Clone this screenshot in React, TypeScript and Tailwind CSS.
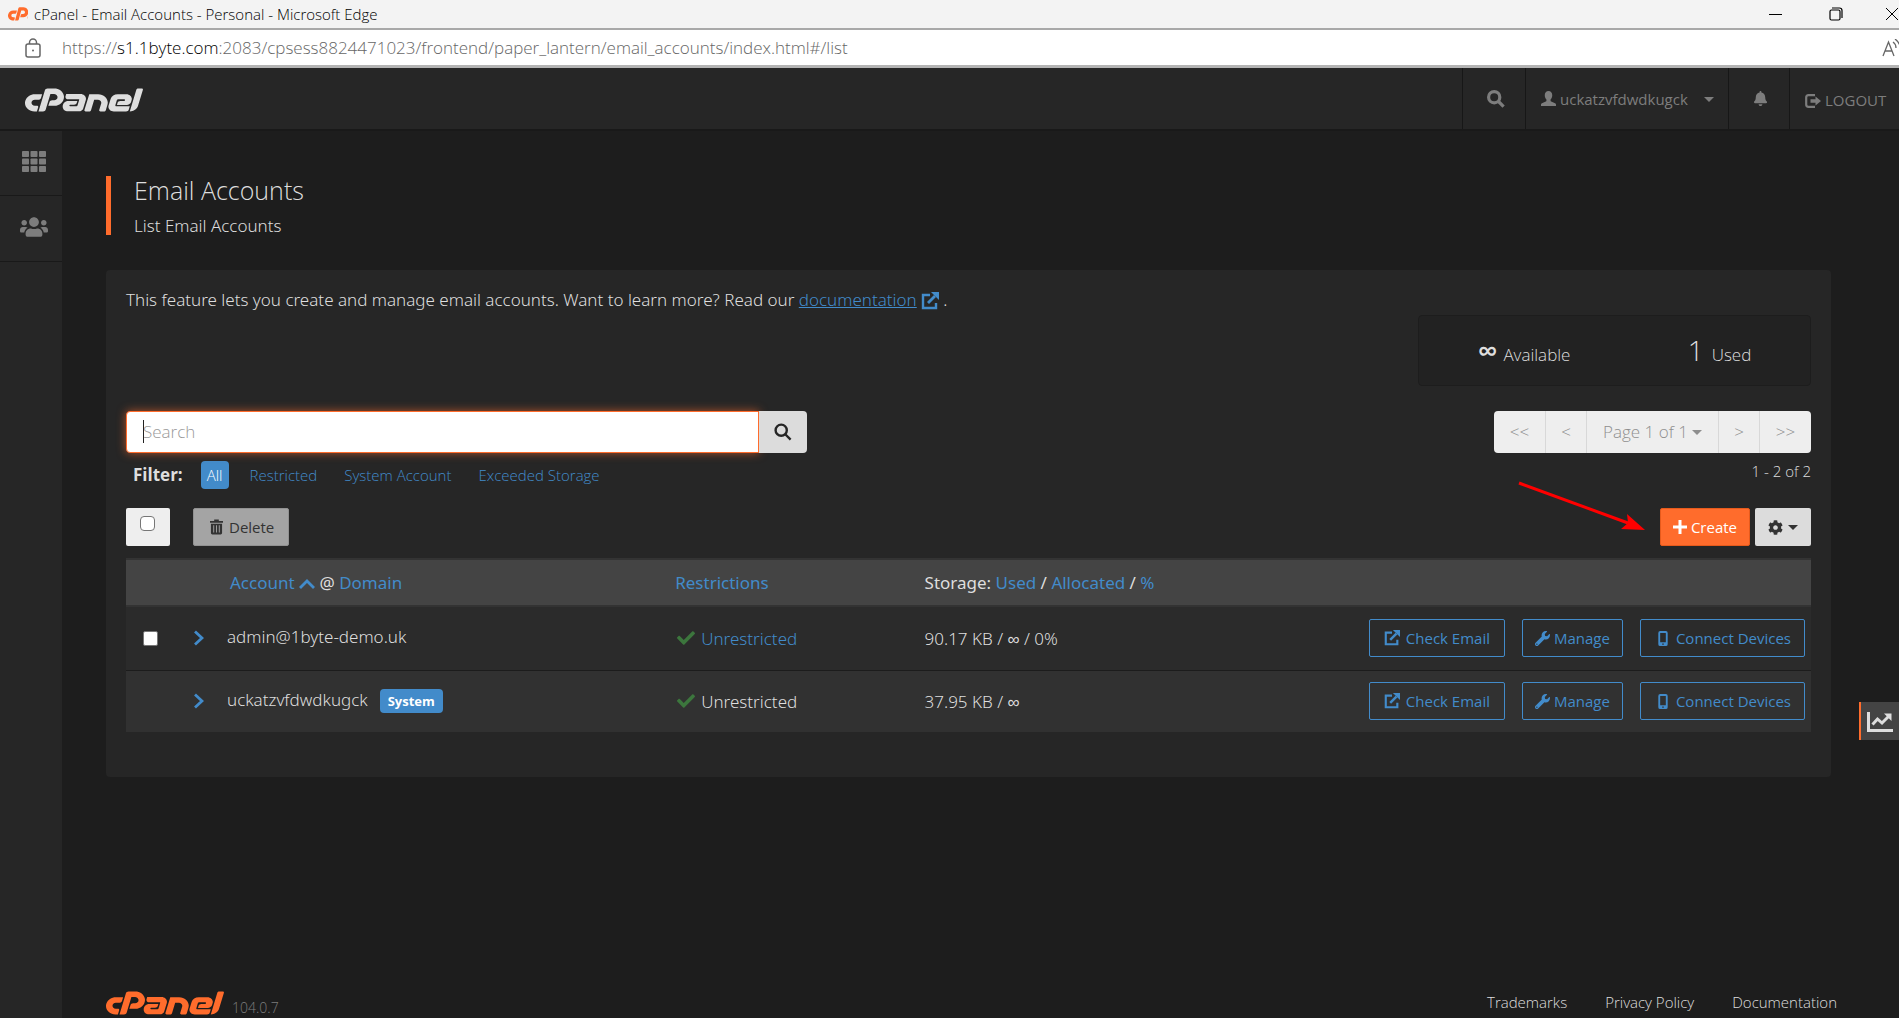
import React from 'react';
import { FaBell, FaCheck, FaCog, FaCpanel, FaUsers, FaWrench } from 'react-icons/fa';

type IconProps = { className?: string };

const ExternalIcon: React.FC<IconProps> = ({ className }) => (
  <svg viewBox="0 0 18 18" className={className} fill="none" stroke="currentColor" aria-hidden="true">
    <path d="M9 3H2v13h13v-5" strokeWidth="2.4" />
    <path d="M7 11L14 4" strokeWidth="2.8" />
    <path d="M10 0h8v8z" fill="currentColor" stroke="none" />
  </svg>
);

const SearchIcon: React.FC<IconProps & { weight: string }> = ({ className, weight }) => (
  <svg viewBox="0 0 18 18" className={className} fill="none" stroke="currentColor" strokeWidth={weight} aria-hidden="true">
    <circle cx="7.2" cy="7.2" r="5.6" />
    <path d="M11.5 11.5L16.6 16.6" />
  </svg>
);

const UserIcon: React.FC<IconProps> = ({ className }) => (
  <svg viewBox="0 0 16 16" className={className} fill="currentColor" aria-hidden="true">
    <path d="M8 0c2.5 0 4 2 4 4.5 0 2-.8 3.6-1.8 4.6v1.2c0 .5.3.8.7 1L15 13c.6.3 1 .8 1 1.5V16H0v-1.5c0-.7.4-1.2 1-1.5l4.1-1.7c.4-.2.7-.5.7-1V9.1C4.8 8.1 4 6.5 4 4.5 4 2 5.5 0 8 0z" />
  </svg>
);

const LogoutIcon: React.FC<IconProps> = ({ className }) => (
  <svg viewBox="0 0 16 14" className={className} fill="currentColor" aria-hidden="true">
    <path d="M10 1.2H3.5Q1.2 1.2 1.2 3.5v7q0 2.3 2.3 2.3H10" fill="none" stroke="currentColor" strokeWidth="2.2" />
    <path d="M5.5 5.3h5V2.5L16 7l-5.5 4.5V8.7h-5z" />
  </svg>
);

const GridIcon: React.FC<IconProps> = ({ className }) => (
  <svg viewBox="0 0 24 21" className={className} fill="currentColor" aria-hidden="true">
    {[0, 7.5, 15].map((y) =>
      [0, 8.5, 17].map((x) => <rect key={`${x}-${y}`} x={x} y={y} width="7" height="6" rx="0.8" />)
    )}
  </svg>
);

const TrashIcon: React.FC<IconProps> = ({ className }) => (
  <svg viewBox="0 0 14 16" className={className} fill="currentColor" aria-hidden="true">
    <path d="M0 1.5h4.5V0h5v1.5H14v2H0z" />
    <path fillRule="evenodd" d="M1 4.5h12V14.5q0 1.5-1.5 1.5h-9Q1 16 1 14.5zM3.5 6v8h1V6zm3 0v8h1V6zm3 0v8h1V6z" />
  </svg>
);

const PhoneIcon: React.FC<IconProps> = ({ className }) => (
  <svg viewBox="0 0 10 16" className={className} fill="currentColor" aria-hidden="true">
    <path fillRule="evenodd" d="M2 0h6q2 0 2 2v12q0 2-2 2H2q-2 0-2-2V2Q0 0 2 0zm0 2v10h6V2zm2.2 11.3v1.4h1.6v-1.4z" />
  </svg>
);

const ChartIcon: React.FC<IconProps> = ({ className }) => (
  <svg viewBox="0 0 26 20" className={className} fill="none" stroke="currentColor" aria-hidden="true">
    <path d="M1.5 0v18.5H26" strokeWidth="3" />
    <path d="M5.5 12.5l5-5.5 4.500 4 6.500-6.500" strokeWidth="3" />
    <path d="M17 1.500h7.500V9z" fill="currentColor" stroke="none" />
  </svg>
);

const Caret: React.FC = () => (
  <svg viewBox="0 0 10 5" className="h-[5px] w-[10px] shrink-0" fill="currentColor" aria-hidden="true">
    <path d="M0 0h10L5 5z" />
  </svg>
);

const CpanelLogo: React.FC<IconProps> = ({ className }) => (
  <FaCpanel viewBox="0 176 640 160" preserveAspectRatio="none" className={className} role="img" aria-label="cPanel" />
);

const filters = ['Restricted', 'System Account', 'Exceeded Storage'];

const accounts = [
  { name: 'admin@1byte-demo.uk', system: false, storage: '90.17 KB / ∞ / 0%' },
  { name: 'uckatzvfdwdkugck', system: true, storage: '37.95 KB / ∞' },
];

const BrowserBar: React.FC = () => (
  <div className="font-light text-black">
    <div className="flex h-7 items-center bg-[#f3f3f3] pl-2 text-[15px]">
      <FaCpanel viewBox="0 176 208 160" preserveAspectRatio="none" className="mr-1.5 h-[15px] w-5 text-[#ff6c2c]" />
      <span className="flex-1">cPanel - Email Accounts - Personal - Microsoft Edge</span>
      <div className="flex h-7 w-[134px] items-center justify-between">
        <button aria-label="Minimize" className="px-1">
          <svg viewBox="0 0 14 14" className="size-[14px]" stroke="currentColor"><path d="M0 7.5h13" /></svg>
        </button>
        <button aria-label="Restore">
          <svg viewBox="0 0 14 14" className="size-[14px]" fill="none" stroke="currentColor" strokeWidth="1.2">
            <rect x="1" y="3" width="10" height="10" rx="1.5" />
            <path d="M3 1h7.5Q13 1 13 3.5V11" />
          </svg>
        </button>
        <button aria-label="Close">
          <svg viewBox="0 0 14 14" className="size-[14px]" stroke="currentColor"><path d="M1 1l12 12M13 1L1 13" /></svg>
        </button>
      </div>
    </div>
    <div className="flex h-10 items-center border-t-2 border-b-3 border-t-[#a8a8a8] border-b-[#b4b4b4] bg-white pl-[25px] text-[17px] text-[#666]">
      <svg viewBox="0 0 16 20" className="mr-[21px] h-5 w-4" fill="none" stroke="currentColor" strokeWidth="1.5" aria-hidden="true">
        <rect x="1" y="6" width="14" height="13" rx="2" />
        <path d="M4.5 6V4.5a3.5 3.5 0 0 1 7 0V6" />
        <circle cx="8" cy="12.5" r="1" fill="currentColor" stroke="none" />
      </svg>
      <span className="flex-1">
        https://<span className="text-black">s1.1byte.com</span>
        :2083/cpsess8824471023/frontend/paper_lantern/email_accounts/index.html#/list
      </span>
      <svg viewBox="0 0 17 18" className="h-[18px] w-[17px]" fill="none" stroke="currentColor" strokeWidth="1.3" aria-hidden="true">
        <path d="M1 17L6.5 3 12 17M3 12h7M11 3q3 2 3 6M13 0q4 3 5 7" />
      </svg>
    </div>
  </div>
);

const TopNav: React.FC = () => (
  <header className="flex h-[63px] items-stretch border-b-2 border-[#191919] bg-[#262626] text-[15px] text-[#7d7d7d]">
    <a href="#home" className="flex flex-1 items-center pt-1 pl-[25px] text-[#dedede]">
      <CpanelLogo className="h-[26px] w-[118px]" />
    </a>
    <button aria-label="Search" className="flex w-[63px] items-center justify-center border-l border-[#171717] pl-1">
      <SearchIcon weight="3.2" className="size-[18px]" />
    </button>
    <button className="flex w-[203px] items-center border-l border-[#171717] pt-0.5 pl-[15px]">
      <UserIcon className="mr-1 mb-0.5 size-[15px]" />
      <span className="mr-4">uckatzvfdwdkugck</span>
      <Caret />
    </button>
    <button aria-label="Notifications" className="flex w-[61px] items-center justify-center border-l border-[#171717] pl-0.5">
      <FaBell className="size-[15px]" />
    </button>
    <a href="#logout" className="flex w-[110px] items-center border-l border-[#171717] pt-1 pl-[15px]">
      <LogoutIcon className="mr-1 h-[14px] w-4" />
      LOGOUT
    </a>
  </header>
);

const AccountRow: React.FC<{ account: (typeof accounts)[number] }> = ({ account }) => (
  <tr className="h-16 border-b border-[#1c1c1c] bg-[#2b2b2b] last:h-[62px] last:border-b-0 last:bg-[#313131]">
    <td className="pl-[17px]">
      {!account.system && (
        <input type="checkbox" aria-label={`Select ${account.name}`} className="block size-[15px] appearance-none rounded-xs border border-[#767676] bg-white" />
      )}
    </td>
    <td>
      <button aria-label={`Expand ${account.name}`} className="block text-[#428bca]">
        <svg viewBox="0 0 10 16" className="h-4 w-[10px]" fill="none" stroke="currentColor" strokeWidth="2.8"><path d="M1 1.5L8 8l-7 6.5" /></svg>
      </button>
    </td>
    <td>
      <div className="flex items-center gap-3">
        <span className="pb-1">{account.name}</span>
        {account.system && (
          <span className="rounded-sm bg-[#428bca] px-2 py-0.5 font-['Open_Sans',sans-serif] text-[13px] leading-5 font-bold text-white">System</span>
        )}
      </div>
    </td>
    <td>
      <div className="flex items-center gap-1.5 pl-0.5">
        <FaCheck className="size-[18px] text-[#3c763d]" />
        {account.system ? 'Unrestricted' : <a href="#restrictions" className="text-[#428bca]">Unrestricted</a>}
      </div>
    </td>
    <td>{account.storage}</td>
    <td className="pr-1.5 font-['Open_Sans',sans-serif] text-[15px] font-normal">
      <div className="flex justify-end gap-[17px] text-[#428bca]">
        <button className="flex h-[38px] items-center gap-1.5 rounded-xs border border-[#428bca] px-[14px]">
          <ExternalIcon className="size-4" />Check Email
        </button>
        <button className="flex h-[38px] items-center gap-1 rounded-xs border border-[#428bca] px-3">
          <FaWrench className="size-[15px]" />Manage
        </button>
        <button className="flex h-[38px] items-center gap-2 rounded-xs border border-[#428bca] pr-[13px] pl-[17px]">
          <PhoneIcon className="h-[15px] w-[10px]" />Connect Devices
        </button>
      </div>
    </td>
  </tr>
);

const AccountTable: React.FC = () => (
  <table className="mt-3 w-full table-fixed text-left font-['Noto_Sans',sans-serif] text-[17px]">
    <thead>
      <tr className="h-[47px] border-y-2 border-[#333] bg-[#444]">
        <th className="w-[68px]" aria-label="Select" />
        <th className="w-[33px]" aria-label="Details" />
        <th className="w-[26.6%] pl-[3px] font-normal">
          <a href="#account" className="text-[#428bca]">
            Account{' '}
            <svg viewBox="0 0 16 10" className="inline h-[10px] w-4 align-baseline" fill="none" stroke="currentColor" strokeWidth="2.8"><path d="M1 9l7-7 7 7" /></svg>
          </a>{' '}
          @ <a href="#domain" className="text-[#428bca]">Domain</a>
        </th>
        <th className="w-[14.8%] font-normal">
          <a href="#restrictions" className="text-[#428bca]">Restrictions</a>
        </th>
        <th className="font-normal">
          Storage: <a href="#used" className="text-[#428bca]">Used</a> / <a href="#allocated" className="text-[#428bca]">Allocated</a> /{' '}
          <a href="#percent" className="text-[#428bca]">%</a>
        </th>
        <th className="w-[460px]" aria-label="Actions" />
      </tr>
    </thead>
    <tbody className="font-light">
      {accounts.map((account) => (
        <AccountRow key={account.name} account={account} />
      ))}
    </tbody>
  </table>
);

const EmailPanel: React.FC = () => (
  <section className="mt-[35px] rounded-sm bg-[#262626] px-5 pt-4 pb-[45px]">
    <p className="mb-0.5 font-['Noto_Sans',sans-serif] text-[17px] leading-[27px] font-light">
      This feature lets you create and manage email accounts. Want to learn more? Read our{' '}
      <a href="#documentation" className="text-[#428bca]">
        <span className="underline">documentation</span>
        <ExternalIcon className="ml-1 inline size-[18px]" />
      </a>{' '}
      .
    </p>

    <div className="ml-auto flex h-[71px] w-[393px] items-center justify-around rounded-sm border border-[#1d1d1d] bg-[#222] text-[17px] font-light">
      <div className="flex items-baseline gap-1.5"><span className="text-[28px] leading-8 font-semibold">∞</span>Available</div>
      <div className="flex items-baseline gap-2"><span className="text-[28px] leading-8">1</span>Used</div>
    </div>

    <div className="mt-[25px] flex items-start justify-between">
      <div className="w-[40.4%]">
        <div className="relative flex h-[42px]">
          <input
            type="text"
            autoFocus
            aria-label="Search"
            placeholder="Search"
            className="min-w-0 flex-1 rounded-l-sm border border-[#ff6c2c] bg-white px-4 text-[17px] font-light text-[#333] caret-transparent shadow-[0_0_10px_#ff6c2ca0] outline-none placeholder:text-[#999]"
          />
          <span className="absolute top-[9px] left-[17px] h-[23px] w-px bg-[#222]" />
          <button aria-label="Run search" className="flex w-12 items-center justify-center rounded-r-sm bg-[#dcdcdc] text-[#262626]">
            <SearchIcon weight="2.4" className="size-[18px]" />
          </button>
        </div>
        <div className="mt-2 flex h-7 items-center pl-[7px] text-[15px] font-light text-[#428bca]">
          <span className="mr-[18px] text-[17px] font-bold text-[#dedede]">Filter:</span>
          <button className="mr-[21px] h-7 rounded bg-[#428bca] px-1.5 text-white">All</button>
          {filters.map((filter) => (
            <button key={filter} className="mr-[27px]">{filter}</button>
          ))}
        </div>
      </div>
      <div>
        <nav aria-label="Pagination" className="flex h-[42px] divide-x divide-[#d8d8d8] overflow-hidden rounded-sm bg-[#eee] text-[17px] font-light text-[#8e8e8e]">
          <button className="w-[52px]">&lt;&lt;</button>
          <button className="w-[41px]">&lt;</button>
          <button className="flex w-[132px] items-center justify-center gap-1">Page 1 of 1 <Caret /></button>
          <button className="w-[41px]">&gt;</button>
          <button className="w-[51px]">&gt;&gt;</button>
        </nav>
        <p className="mt-2 text-right text-[15px] leading-5 font-light">1 - 2 of 2</p>
      </div>
    </div>

    <div className="mt-[19px] flex h-[38px] text-[15px]">
      <label className="flex w-11 justify-center rounded-xs bg-[#eee] pt-2 pr-px">
        <input type="checkbox" aria-label="Select all" className="size-[15px] appearance-none rounded-sm border border-[#767676] bg-white" />
      </label>
      <button className="ml-[23px] flex items-center gap-1.5 rounded-xs border border-[#919191] bg-[#a4a4a4] px-[14px] pl-4 text-[#333]">
        <TrashIcon className="h-4 w-[13px]" />Delete
      </button>
      <div className="relative ml-auto flex gap-[5px]">
        <svg viewBox="0 0 130 52" className="absolute top-[-28px] right-[164px] h-[52px] w-[130px]" fill="red" aria-hidden="true">
          <path d="M2 3L111 43" stroke="red" strokeWidth="3" />
          <path d="M110 34l18 16-24-1 7-6z" />
        </svg>
        <button className="flex items-center gap-1 rounded-xs border border-[#e65a1c] bg-[#ff6c2c] px-3 font-medium text-white">
          <svg viewBox="0 0 14 14" className="size-[14px]" stroke="currentColor" strokeWidth="3" aria-hidden="true"><path d="M0 7h14M7 0v14" /></svg>
          Create
        </button>
        <button aria-label="Settings" className="flex w-14 items-center justify-center gap-[5px] rounded-xs bg-[#dcdcdc] text-[#333]">
          <FaCog className="size-[15px]" /><Caret />
        </button>
      </div>
    </div>

    <AccountTable />
  </section>
);

export default function App() {
  return (
    <div className="flex min-h-screen flex-col bg-[#1d1d1d] font-['Open_Sans',sans-serif] text-[#dedede]">
      <BrowserBar />
      <TopNav />
      <div className="flex flex-1">
        <aside className="w-[62px] bg-[#262626] text-[#7d7d7d]">
          <a href="#apps" aria-label="Home" className="flex h-[65px] items-center justify-center border-b border-[#191919] pb-1 pl-1.5">
            <GridIcon className="h-[21px] w-6" />
          </a>
          <a href="#users" aria-label="User Manager" className="flex h-[66px] items-center justify-center border-b border-[#191919] pb-1 pl-1.5">
            <FaUsers className="size-7" />
          </a>
        </aside>
        <div className="flex min-w-0 flex-1 flex-col pt-[45px] pr-[68px] pl-11">
          <div className="h-[59px] border-l-5 border-[#ff6c2c] pl-[23px] font-light">
            <h1 className="text-[25px] leading-[28px]">Email Accounts</h1>
            <h2 className="mt-2 font-['Noto_Sans',sans-serif] text-[17px] leading-[27px]">List Email Accounts</h2>
          </div>
          <EmailPanel />
          <footer className="mt-auto flex items-start text-[15px] font-light">
            <CpanelLogo className="h-[26px] w-[118px] text-[#ff6c2c]" />
            <span className="ml-2 flex-1 pt-1.5 text-[14px] text-[#7d7d7d]">104.0.7</span>
            <nav className="-mr-1.5 flex gap-[38px]">
              <a href="#trademarks">Trademarks</a>
              <a href="#privacy">Privacy Policy</a>
              <a href="#docs">Documentation</a>
            </nav>
          </footer>
        </div>
      </div>
      <button aria-label="Statistics" className="fixed top-[702px] right-0 flex h-[38px] w-10 items-center justify-center border-l-2 border-[#ff6c2c] bg-[#444] pt-0.5 text-[#dedede]">
        <ChartIcon className="h-5 w-[26px]" />
      </button>
    </div>
  );
}
